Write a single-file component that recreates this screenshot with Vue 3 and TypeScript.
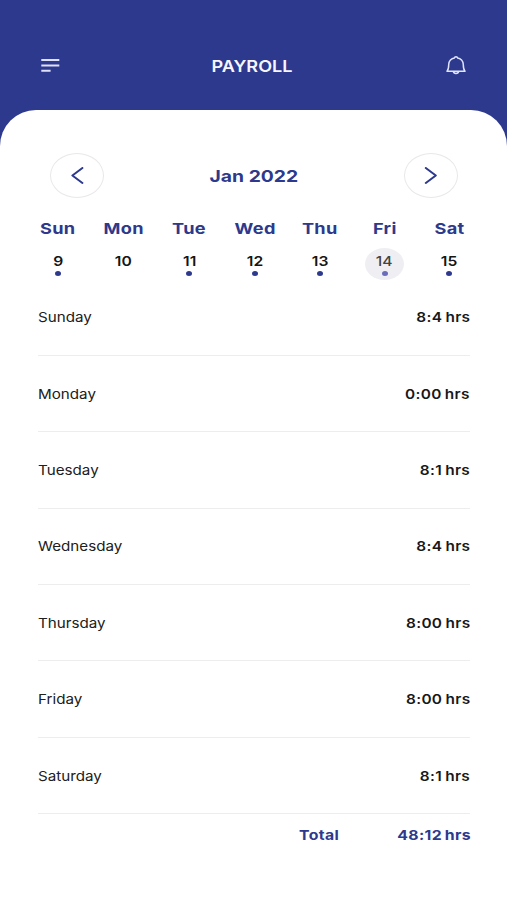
<script setup lang="ts">
interface Day { name: string; date: number; worked: boolean; selected?: boolean }
interface Entry { day: string; hours: string }

const days: Day[] = [
  { name: 'Sun', date: 9, worked: true },
  { name: 'Mon', date: 10, worked: false },
  { name: 'Tue', date: 11, worked: true },
  { name: 'Wed', date: 12, worked: true },
  { name: 'Thu', date: 13, worked: true },
  { name: 'Fri', date: 14, worked: true, selected: true },
  { name: 'Sat', date: 15, worked: true },
]

const entries: Entry[] = [
  { day: 'Sunday', hours: '8:4 hrs' },
  { day: 'Monday', hours: '0:00 hrs' },
  { day: 'Tuesday', hours: '8:1 hrs' },
  { day: 'Wednesday', hours: '8:4 hrs' },
  { day: 'Thursday', hours: '8:00 hrs' },
  { day: 'Friday', hours: '8:00 hrs' },
  { day: 'Saturday', hours: '8:1 hrs' },
]
</script>

<template>
  <div class="screen">
    <header class="topbar">
      <svg class="menu" viewBox="0 0 20 16" fill="none" stroke="#dfe0fa" stroke-width="2">
        <path d="M1.3 2H19.3M1.3 7.4H19.3M1.3 12.8H10.6" />
      </svg>
      <h1 class="title">PAYROLL</h1>
      <svg class="bell" viewBox="0 0 20 20" fill="none" stroke="#dfe5ff" stroke-width="1.5" stroke-linejoin="round" stroke-linecap="round">
        <path d="M1 15.3C2.5 13.7 2.7 12 2.7 8.8C2.7 4.9 5.5 2.4 8.4 1.9C8.6 .5 11.4 .5 11.6 1.9C14.5 2.4 17.3 4.9 17.3 8.8C17.3 12 17.5 13.7 19 15.3Z" />
        <path d="M7.4 15.7C7.7 18.1 12.3 18.1 12.6 15.7" />
      </svg>
    </header>

    <main class="sheet">
      <div class="month">
        <button class="step" aria-label="Previous week">
          <svg viewBox="0 0 14 18"><path d="M12.4 1L2.4 8.5L12.4 16" /></svg>
        </button>
        <h2 class="month-name">Jan 2022</h2>
        <button class="step" aria-label="Next week">
          <svg viewBox="0 0 14 18"><path d="M1.8 1L11.8 8.5L1.8 16" /></svg>
        </button>
      </div>

      <div class="week">
        <div v-for="day in days" :key="day.name" class="day">
          <span class="day-name">{{ day.name }}</span>
          <div class="date" :class="{ selected: day.selected }">
            <span class="number">{{ day.date }}</span>
            <i v-if="day.worked" class="dot"></i>
          </div>
        </div>
      </div>

      <ul class="entries">
        <li v-for="entry in entries" :key="entry.day" class="entry">
          <span class="entry-day">{{ entry.day }}</span>
          <span class="entry-hours">{{ entry.hours }}</span>
        </li>
      </ul>

      <div class="total">
        <span class="total-label">Total</span>
        <span class="total-hours">48:12 hrs</span>
      </div>
    </main>
  </div>
</template>

<style>
body { margin: 0; background: #2d398c; }
</style>

<style scoped>
.screen {
  box-sizing: border-box;
  width: 507px;
  height: 900px;
  overflow: hidden;
  background: #2d398c;
  font-family: Inter, "Liberation Sans", sans-serif;
}
.topbar {
  box-sizing: border-box;
  height: 110px;
  padding: 21px 41px 0 40px;
  display: grid;
  grid-template-columns: 20px 1fr 20px;
  align-items: center;
}
.menu { width: 20px; height: 16px; }
.bell { width: 20px; height: 20px; }
.title {
  margin: 0 2px 0 0;
  text-align: center;
  color: #f5f6ff;
  font-size: 16px;
  font-weight: 600;
  line-height: 20px;
  transform: scaleX(1.13);
}
.sheet {
  box-sizing: border-box;
  height: 790px;
  padding-top: 43px;
  border-radius: 36px 36px 0 0;
  background: #fff;
}
.month {
  height: 45px;
  padding: 0 49px 0 50px;
  display: flex;
  align-items: center;
  justify-content: space-between;
}
.step {
  box-sizing: border-box;
  width: 54px;
  height: 45px;
  padding: 0;
  display: grid;
  place-items: center;
  border: 1.5px solid #e8e8eb;
  border-radius: 50%;
  background: #fff;
}
.step svg {
  width: 14px;
  height: 18px;
  fill: none;
  stroke: #2d398c;
  stroke-width: 2;
  stroke-linecap: round;
  stroke-linejoin: round;
}
.month-name {
  margin: 0;
  color: #2d398c;
  font-size: 16.5px;
  font-weight: 700;
  line-height: 20px;
  transform: scaleX(1.17);
}
.week {
  box-sizing: border-box;
  height: 81.5px;
  padding: 21px 25px 0;
  display: grid;
  grid-template-columns: 66px 65.5px 65.5px 65.5px 65px 64px 65px;
}
.day { display: flex; flex-direction: column; align-items: center; }
.day-name {
  color: #2d398c;
  font-size: 15px;
  font-weight: 700;
  line-height: 20px;
  letter-spacing: .3px;
  transform: scaleX(1.21);
}
.date {
  flex: none;
  width: 39px;
  height: 32px;
  margin-top: 9px;
  display: flex;
  flex-direction: column;
  align-items: center;
  border-radius: 50%;
}
.selected { background: #efeff3; }
.number {
  margin-top: 3px;
  color: #151515;
  font-size: 13.5px;
  font-weight: 600;
  line-height: 20px;
  transform: scaleX(1.16);
}
.selected .number { color: #444; font-weight: 500; }
.dot {
  width: 6px;
  height: 5px;
  border-radius: 50%;
  background: #2d398c;
}
.selected .dot { background: #686cbb; }
.entries { margin: 0; padding: 0 37px 0 38px; list-style: none; }
.entry {
  box-sizing: border-box;
  height: 76.4px;
  display: flex;
  align-items: center;
  justify-content: space-between;
  border-bottom: 1px solid #ededee;
  font-size: 13.5px;
  line-height: 20px;
  color: #202020;
}
.entry-day { margin-left: -.5px; transform: scaleX(1.125); transform-origin: left; }
.entry-hours {
  color: #181818;
  font-weight: 600;
  letter-spacing: .25px;
  word-spacing: -.8px;
  transform: scaleX(1.14);
  transform-origin: right;
}
.total {
  padding: 10.5px 36px 0 0;
  display: flex;
  justify-content: flex-end;
  color: #2d398c;
  font-size: 13.5px;
  font-weight: 700;
  line-height: 20px;
  letter-spacing: .3px;
}
.total-label { width: 40px; margin-right: 69.5px; white-space: nowrap; }
.total-label, .total-hours { transform: scaleX(1.17); }
.total-label { transform-origin: left; }
.total-hours { word-spacing: -1.2px; transform-origin: right; }
</style>
